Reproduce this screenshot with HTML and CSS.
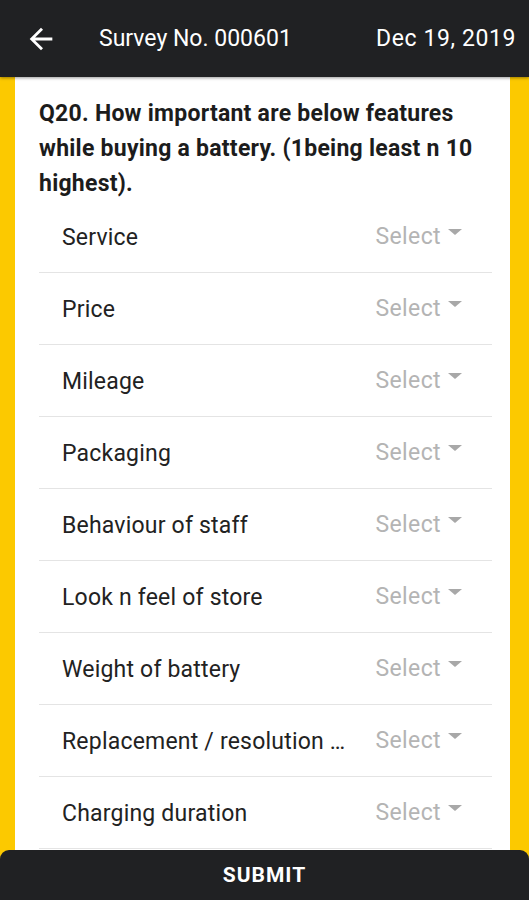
FILE: index.html
```html
<!DOCTYPE html>
<html>
<head>
    <title>Survey</title>
    <link rel="stylesheet" href="styles.css">
</head>
<body>
    <div class="header">
        <svg class="back" width="34" height="34" viewBox="0 0 24 24"><path d="M20 11H7.83l5.59-5.59L12 4l-8 8 8 8 1.41-1.41L7.83 13H20v-2z" fill="#fff"/></svg>
        <div class="title">Survey No. 000601</div>
        <div class="date">Dec 19, 2019</div>
    </div>

    <div class="frame">
        <div class="card">
            <div class="question">Q20. How important are below features while buying a battery. (1being least n 10 highest).</div>

            <div class="row"><span class="label">Service</span><span class="select">Select <i class="caret"></i></span></div>
            <div class="row"><span class="label">Price</span><span class="select">Select <i class="caret"></i></span></div>
            <div class="row"><span class="label">Mileage</span><span class="select">Select <i class="caret"></i></span></div>
            <div class="row"><span class="label">Packaging</span><span class="select">Select <i class="caret"></i></span></div>
            <div class="row"><span class="label">Behaviour of staff</span><span class="select">Select <i class="caret"></i></span></div>
            <div class="row"><span class="label">Look n feel of store</span><span class="select">Select <i class="caret"></i></span></div>
            <div class="row"><span class="label">Weight of battery</span><span class="select">Select <i class="caret"></i></span></div>
            <div class="row"><span class="label">Replacement / resolution time</span><span class="select">Select <i class="caret"></i></span></div>
            <div class="row"><span class="label">Charging duration</span><span class="select">Select <i class="caret"></i></span></div>
        </div>
    </div>

    <div class="submit">SUBMIT</div>
</body>
</html>
```

FILE: styles.css
```css
html, body {
    margin: 0;
    padding: 0;
    height: 100%;
    overflow: hidden;
}

body {
    font-family: Roboto, "Liberation Sans", sans-serif;
    background: #fcc900;
    display: flex;
    flex-direction: column;
}

.header {
    height: 77px;
    flex: none;
    background: #202123;
    color: #fff;
    display: flex;
    align-items: center;
    padding: 0 13px 0 24px;
    box-shadow: 0 1px 3px rgba(0, 0, 0, 0.4);
    position: relative;
    z-index: 1;
}

.back {
    margin-right: 41px;
}

.title {
    font-size: 23px;
    flex: 1;
}

.date {
    font-size: 23px;
    letter-spacing: 0.6px;
}

.frame {
    flex: 1;
    padding: 0 19px 0 15px;
    min-height: 0;
}

.card {
    background: #fff;
    height: 100%;
    padding: 0 18px 0 24px;
}

.question {
    font-size: 23px;
    font-weight: bold;
    letter-spacing: 0.25px;
    color: #1c1c1c;
    line-height: 35px;
    padding-top: 19px;
}

.row {
    height: 71px;
    border-bottom: 1px solid #e4e4e4;
    display: flex;
    align-items: center;
    padding: 0 30px 0 23px;
}

.label {
    font-size: 23px;
    letter-spacing: 0.2px;
    color: #222;
    flex: 1;
    white-space: nowrap;
    overflow: hidden;
    text-overflow: ellipsis;
    padding-right: 24px;
    padding-top: 2px;
}

.select {
    font-size: 23px;
    letter-spacing: 0.4px;
    color: #b4b4b4;
    display: flex;
    align-items: center;
    white-space: nowrap;
}

.caret {
    width: 0;
    height: 0;
    border-left: 7px solid transparent;
    border-right: 7px solid transparent;
    border-top: 6px solid #a8a8a8;
    margin-left: 7px;
    margin-top: -10px;
}

.submit {
    position: absolute;
    left: 0;
    right: 0;
    bottom: 0;
    height: 50px;
    background: #202123;
    color: #fff;
    border-radius: 9px 9px 0 0;
    font-size: 21px;
    font-weight: bold;
    letter-spacing: 1px;
    display: flex;
    align-items: center;
    justify-content: center;
}
```
